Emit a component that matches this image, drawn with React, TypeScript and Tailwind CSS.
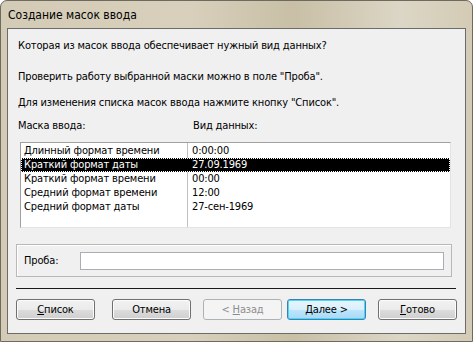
import React from "react";

const font = { fontFamily: '"DejaVu Sans Condensed", "DejaVu Sans", Tahoma, sans-serif' };

function Btn({ children, kind = "normal", ml }: { children: React.ReactNode; kind?: "normal" | "default" | "disabled"; ml: string }) {
  const base =
    "w-[79px] h-[21px] rounded-[3px] flex items-center justify-center text-[11px] leading-none shrink-0 " + ml + " ";
  if (kind === "disabled")
    return (
      <div className={base + "border border-[#adb2b5] bg-[#f4f4f4] text-[#8d8d8d]"}>{children}</div>
    );
  if (kind === "default")
    return (
      <div className={base + "border border-[#3c7fb1] bg-[linear-gradient(#eaf6fd_0%,#d9f0fc_50%,#bee6fd_51%,#a7d9f5_100%)] shadow-[inset_0_0_0_1px_#48d8fb] text-black"}>
        {children}
      </div>
    );
  return (
    <div className={base + "border border-[#707070] bg-[linear-gradient(#f2f2f2_0%,#ebebeb_50%,#dddddd_51%,#cfcfcf_100%)] shadow-[inset_0_0_0_1px_#fcfcfc] text-black"}>
      {children}
    </div>
  );
}

export default function App() {
  const rows = [
    ["Длинный формат времени", "0:00:00"],
    ["Краткий формат даты", "27.09.1969"],
    ["Краткий формат времени", "00:00"],
    ["Средний формат времени", "12:00"],
    ["Средний формат даты", "27-сен-1969"],
  ];
  return (
    <div style={font} className="w-[473px] h-[342px] bg-[#d5cdb8] rounded-t-[7px] border border-[#6f6a5e] flex flex-col overflow-hidden bg-[linear-gradient(90deg,#d3cbb5_0%,#d8d0bc_40%,#c8bfa6_62%,#dcd6c6_85%,#d3cbb5_100%)]">
      <div className="h-[27px] shrink-0 flex items-center pl-[7px] pt-[1px] text-[12px] text-black">
        Создание масок ввода
      </div>
      <div className="mx-[6px] mb-[7px] flex-1 border border-[#6b6b6b] bg-[#f0f0f0] flex flex-col text-[11px] text-black leading-[14px] tracking-[-0.15px]">
        <div className="pl-[10px] pt-[10px]">Которая из масок ввода обеспечивает нужный вид данных?</div>
        <div className="pl-[10px] mt-[17px]">Проверить работу выбранной маски можно в поле "Проба".</div>
        <div className="pl-[10px] mt-[12px]">Для изменения списка масок ввода нажмите кнопку "Список".</div>
        <div className="pl-[10px] mt-[9px] flex">
          <div className="w-[175px]">Маска ввода:</div>
          <div>Вид данных:</div>
        </div>
        <div className="ml-[12px] mt-[9px] w-[431px] h-[86px] bg-white border border-t-[#a0a0a0] border-l-[#a0a0a0] border-r-[#e3e3e3] border-b-[#e3e3e3] relative">
          <div className="absolute left-[166px] top-0 bottom-0 w-px bg-[#c0c0c0]" />
          <div className="flex flex-col pt-[1px]">
            {rows.map(([a, b], i) => (
              <div
                key={i}
                className={
                  "flex h-[14px] items-center relative " +
                  (i === 1 ? "bg-black text-white outline outline-1 outline-dotted outline-white -outline-offset-1" : "")
                }
              >
                <div className="w-[167px] pl-[3px] whitespace-nowrap">{a}</div>
                <div className="pl-[4px]">{b}</div>
              </div>
            ))}
          </div>
        </div>
        <div className="ml-[8px] mt-[16px] w-[436px] h-[33px] border border-[#b8b8b8] shadow-[inset_1px_1px_0_#ffffff] flex items-center">
          <div className="pl-[7px] w-[63px]">Проба:</div>
          <div className="w-[364px] h-[18px] bg-white border border-[#abadb3]" />
        </div>
        <div className="ml-[8px] mt-[11px] w-[440px] h-px bg-[#1a1a1a]" />
        <div className="flex mt-[10px] ml-[8px]">
          <Btn ml="ml-0">
            <span><span className="underline">С</span>писок</span>
          </Btn>
          <Btn ml="ml-[17px]">Отмена</Btn>
          <Btn ml="ml-[12px]" kind="disabled">
            <span>&lt; <span className="underline">Н</span>азад</span>
          </Btn>
          <Btn ml="ml-[5px]" kind="default">
            <span><span className="underline">Д</span>алее &gt;</span>
          </Btn>
          <Btn ml="ml-[12px]">
            <span><span className="underline">Г</span>отово</span>
          </Btn>
        </div>
      </div>
    </div>
  );
}
